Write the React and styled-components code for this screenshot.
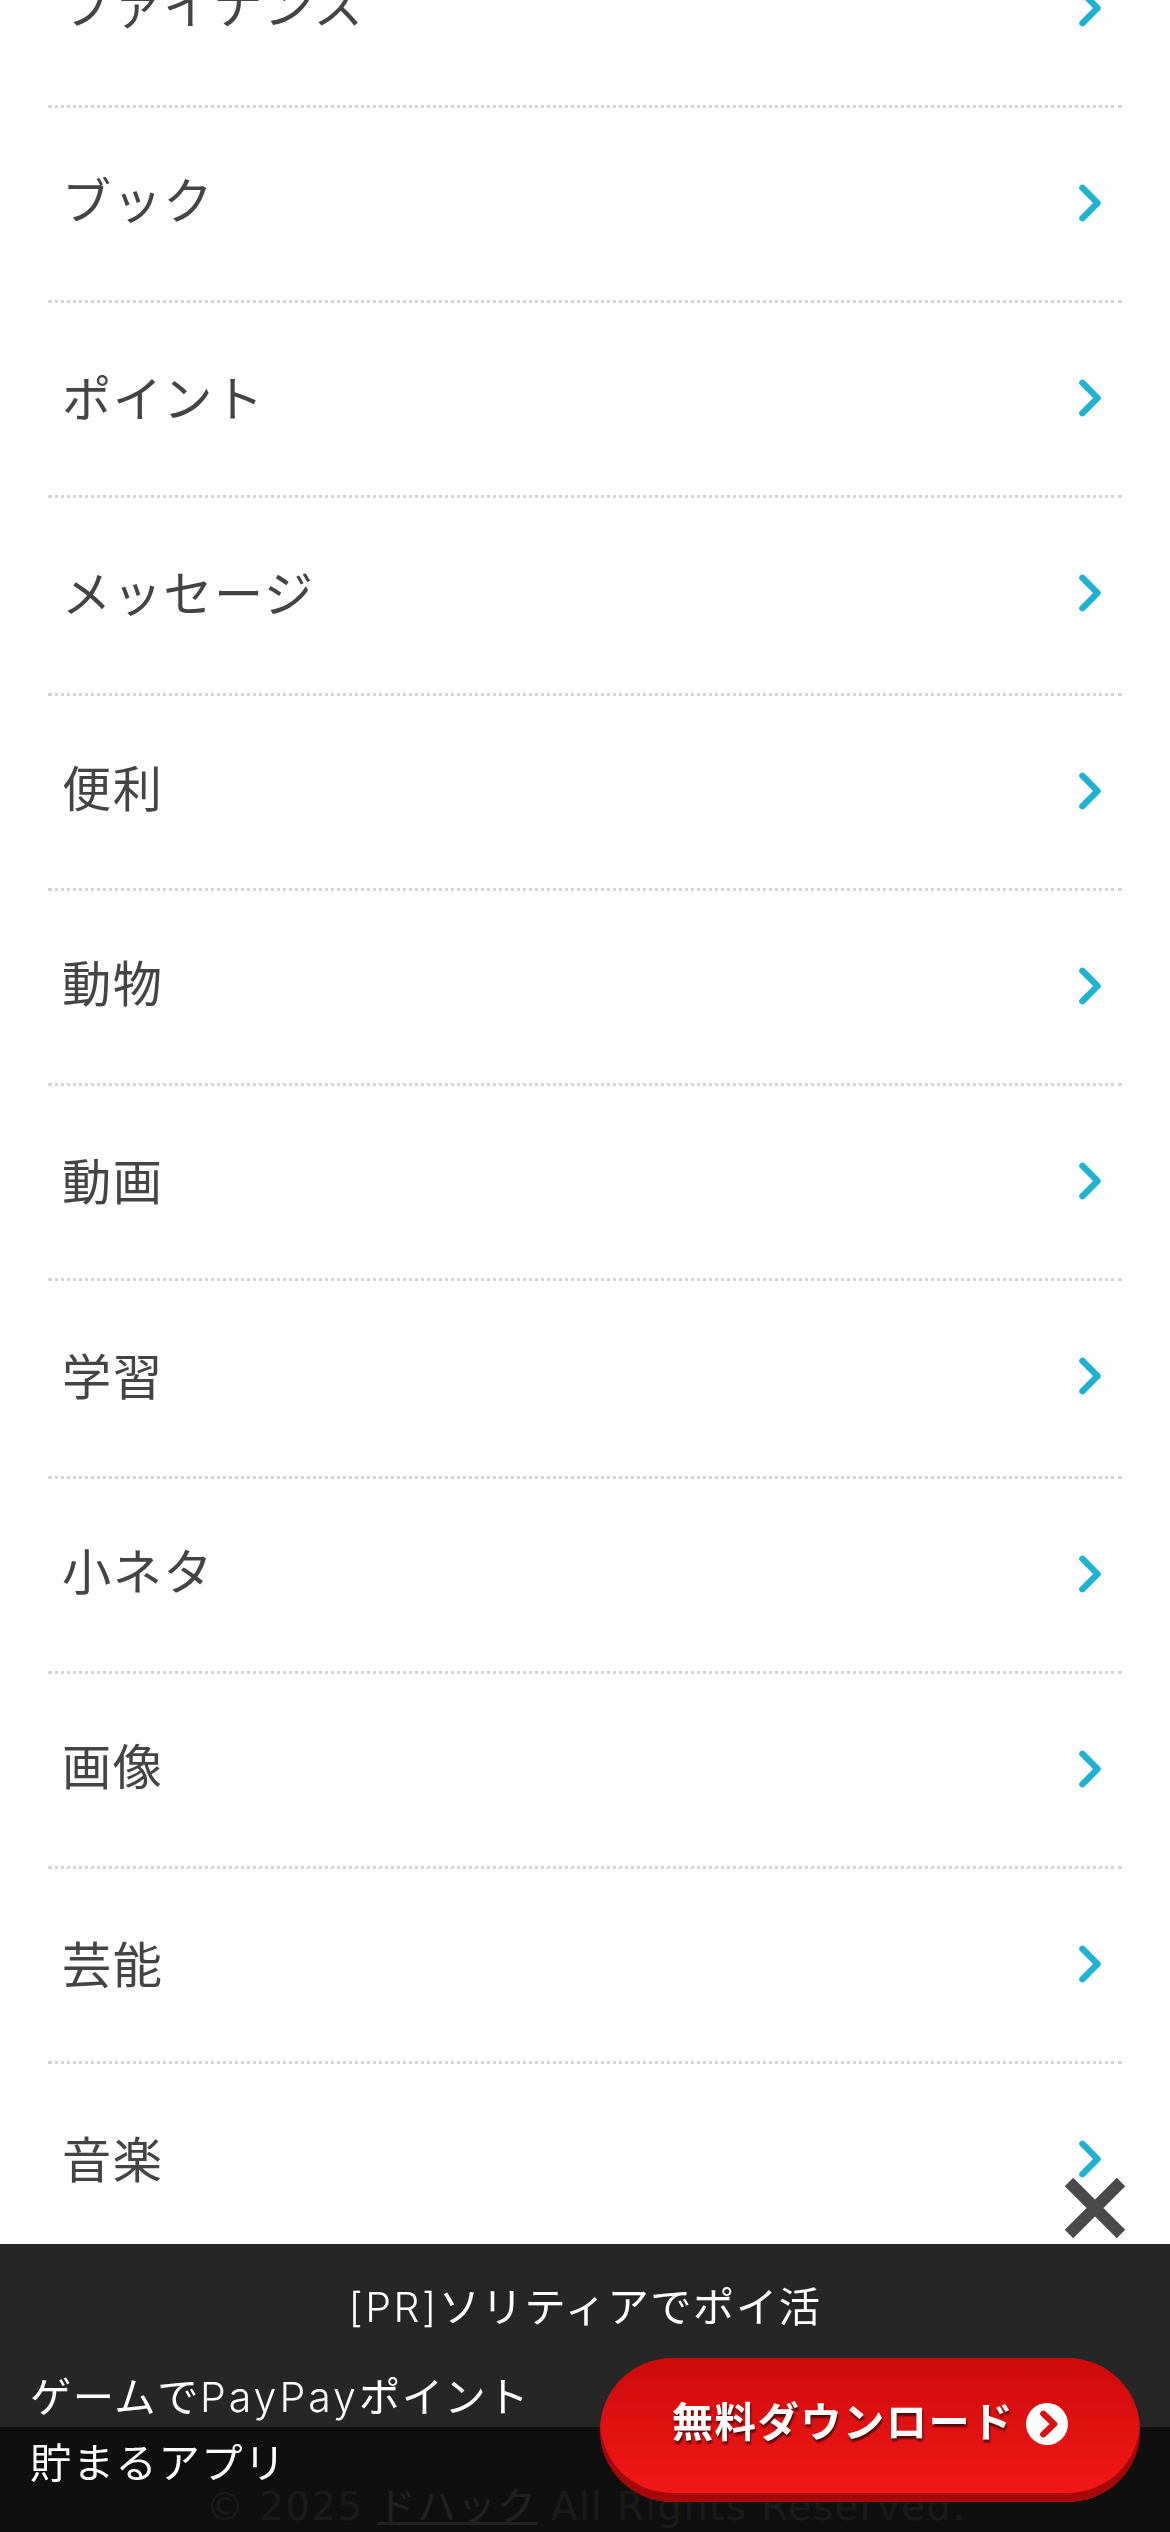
import React from 'react';
import styled, { createGlobalStyle } from 'styled-components';

const GlobalStyle = createGlobalStyle`
    html, body {
        margin: 0;
        background: #fefefe;
    }
    * {
        box-sizing: border-box;
    }
`

const Page = styled.div`
    width: 1170px;
    height: 2532px;
    overflow: hidden;
    display: flex;
    flex-direction: column;
    justify-content: space-between;
    font-family: "Noto Sans CJK JP", sans-serif;
    background: #fefefe;
`

const CategoryList = styled.ul`
    list-style: none;
    margin: -87px 48px 0;
    padding: 0;
`

const CategoryItem = styled.li`
    display: flex;
    align-items: flex-start;
    justify-content: space-between;
    height: ${props => props.$height || 195}px;
    padding: 0 21px 0 14px;
    border-bottom: 3px dotted #d4d4d4;
    color: #444;
    &:last-child {
        border-bottom: none;
    }
    svg {
        margin-top: 76px;
    }
`

const CategoryName = styled.span`
    padding-top: ${props => props.$top || 57}px;
    font-size: 49.2px;
    line-height: 72px;
    letter-spacing: 1.5px;
`

const Footer = styled.footer`
    height: 105px;
    flex: none;
    padding: 56px 0 0 2px;
    background: #666;
    color: #b4b4b4;
    text-align: center;
    font-family: "DejaVu Sans", "Noto Sans CJK JP", sans-serif;
    font-size: 38.5px;
    line-height: 48px;
    letter-spacing: 1.5px;
    white-space: nowrap;
    a {
        color: #e4e4e4;
        text-decoration: underline;
    }
`

const AdBar = styled.aside`
    position: fixed;
    left: 0;
    top: 2244px;
    width: 1170px;
    height: 288px;
    padding-top: 30px;
    background: rgba(0, 0, 0, 0.85);
    color: #fff;
    font-size: 41.3px;
    letter-spacing: 1.5px;
`

const CloseButton = styled.button`
    position: absolute;
    top: -66px;
    right: 45px;
    padding: 0;
    border: 0;
    background: none;
    line-height: 0;
`

const AdTitle = styled.p`
    margin: 0;
    line-height: 60px;
    text-align: center;
`

const Latin = styled.span`
    font-family: Inter, sans-serif;
    font-size: 41px;
    font-weight: 300;
    line-height: 1;
    letter-spacing: ${props => props.$spacing}px;
`

const AdBody = styled.div`
    display: flex;
    justify-content: space-between;
    padding: 24px 30px 0;
`

const AdText = styled.p`
    margin: 3px 0 0;
    line-height: 66px;
    white-space: nowrap;
`

const DownloadButton = styled.a`
    display: flex;
    align-items: center;
    justify-content: center;
    gap: 12px;
    width: 540px;
    height: 144px;
    padding-bottom: 22px;
    border-radius: 72px;
    background: linear-gradient(#cd0a0a, #f51919);
    box-shadow: inset 0 -9px 0 #a50808;
    font-weight: 700;
    text-shadow: 1px 3px 2px rgba(0, 0, 0, 0.6);
    svg {
        margin-top: 10px;
    }
`

const categories = [
    { name: 'ファイナンス', top: 54 },
    { name: 'ブック', top: 54 },
    { name: 'ポイント' },
    { name: 'メッセージ', height: 198 },
    { name: '便利', top: 54 },
    { name: '動物', top: 54 },
    { name: '動画' },
    { name: '学習', height: 198 },
    { name: '小ネタ', top: 54 },
    { name: '画像', top: 54 },
    { name: '芸能' },
    { name: '音楽' }
]

const Chevron = () => (
    <svg width="22" height="38" viewBox="0 0 22 38" fill="none" stroke="#20b2d2" strokeWidth="6.4" strokeLinecap="round" strokeLinejoin="round">
        <path d="M3.4 3.8L18.5 19L3.4 34.2" />
    </svg>
)

const App = () => {
    return (
        <Page>
            <GlobalStyle />
            <CategoryList>
                {categories.map(category => (
                    <CategoryItem key={category.name} $height={category.height}>
                        <CategoryName $top={category.top}>{category.name}</CategoryName>
                        <Chevron />
                    </CategoryItem>
                ))}
            </CategoryList>
            <Footer>© 2025 <a>ドハック</a> All Rights Reserved.</Footer>
            <AdBar>
                <CloseButton aria-label="閉じる">
                    <svg width="60" height="60" viewBox="0 0 60 60" stroke="#4a4a4a" strokeWidth="12">
                        <path d="M4 4L56 56M56 4L4 56" />
                    </svg>
                </CloseButton>
                <AdTitle><Latin $spacing={2.5}>[PR]</Latin>ソリティアでポイ活</AdTitle>
                <AdBody>
                    <AdText>ゲームで<Latin $spacing={3}>PayPay</Latin>ポイント<br />貯まるアプリ</AdText>
                    <DownloadButton>
                        無料ダウンロード
                        <svg width="42" height="42" viewBox="0 0 42 42" fill="none">
                            <circle cx="21" cy="21" r="21" fill="#fff" />
                            <path d="M17.4 10.8L28 21L17.4 31.2" stroke="#d91010" strokeWidth="6.4" strokeLinecap="round" strokeLinejoin="round" />
                        </svg>
                    </DownloadButton>
                </AdBody>
            </AdBar>
        </Page>
    );
}

export default App;
